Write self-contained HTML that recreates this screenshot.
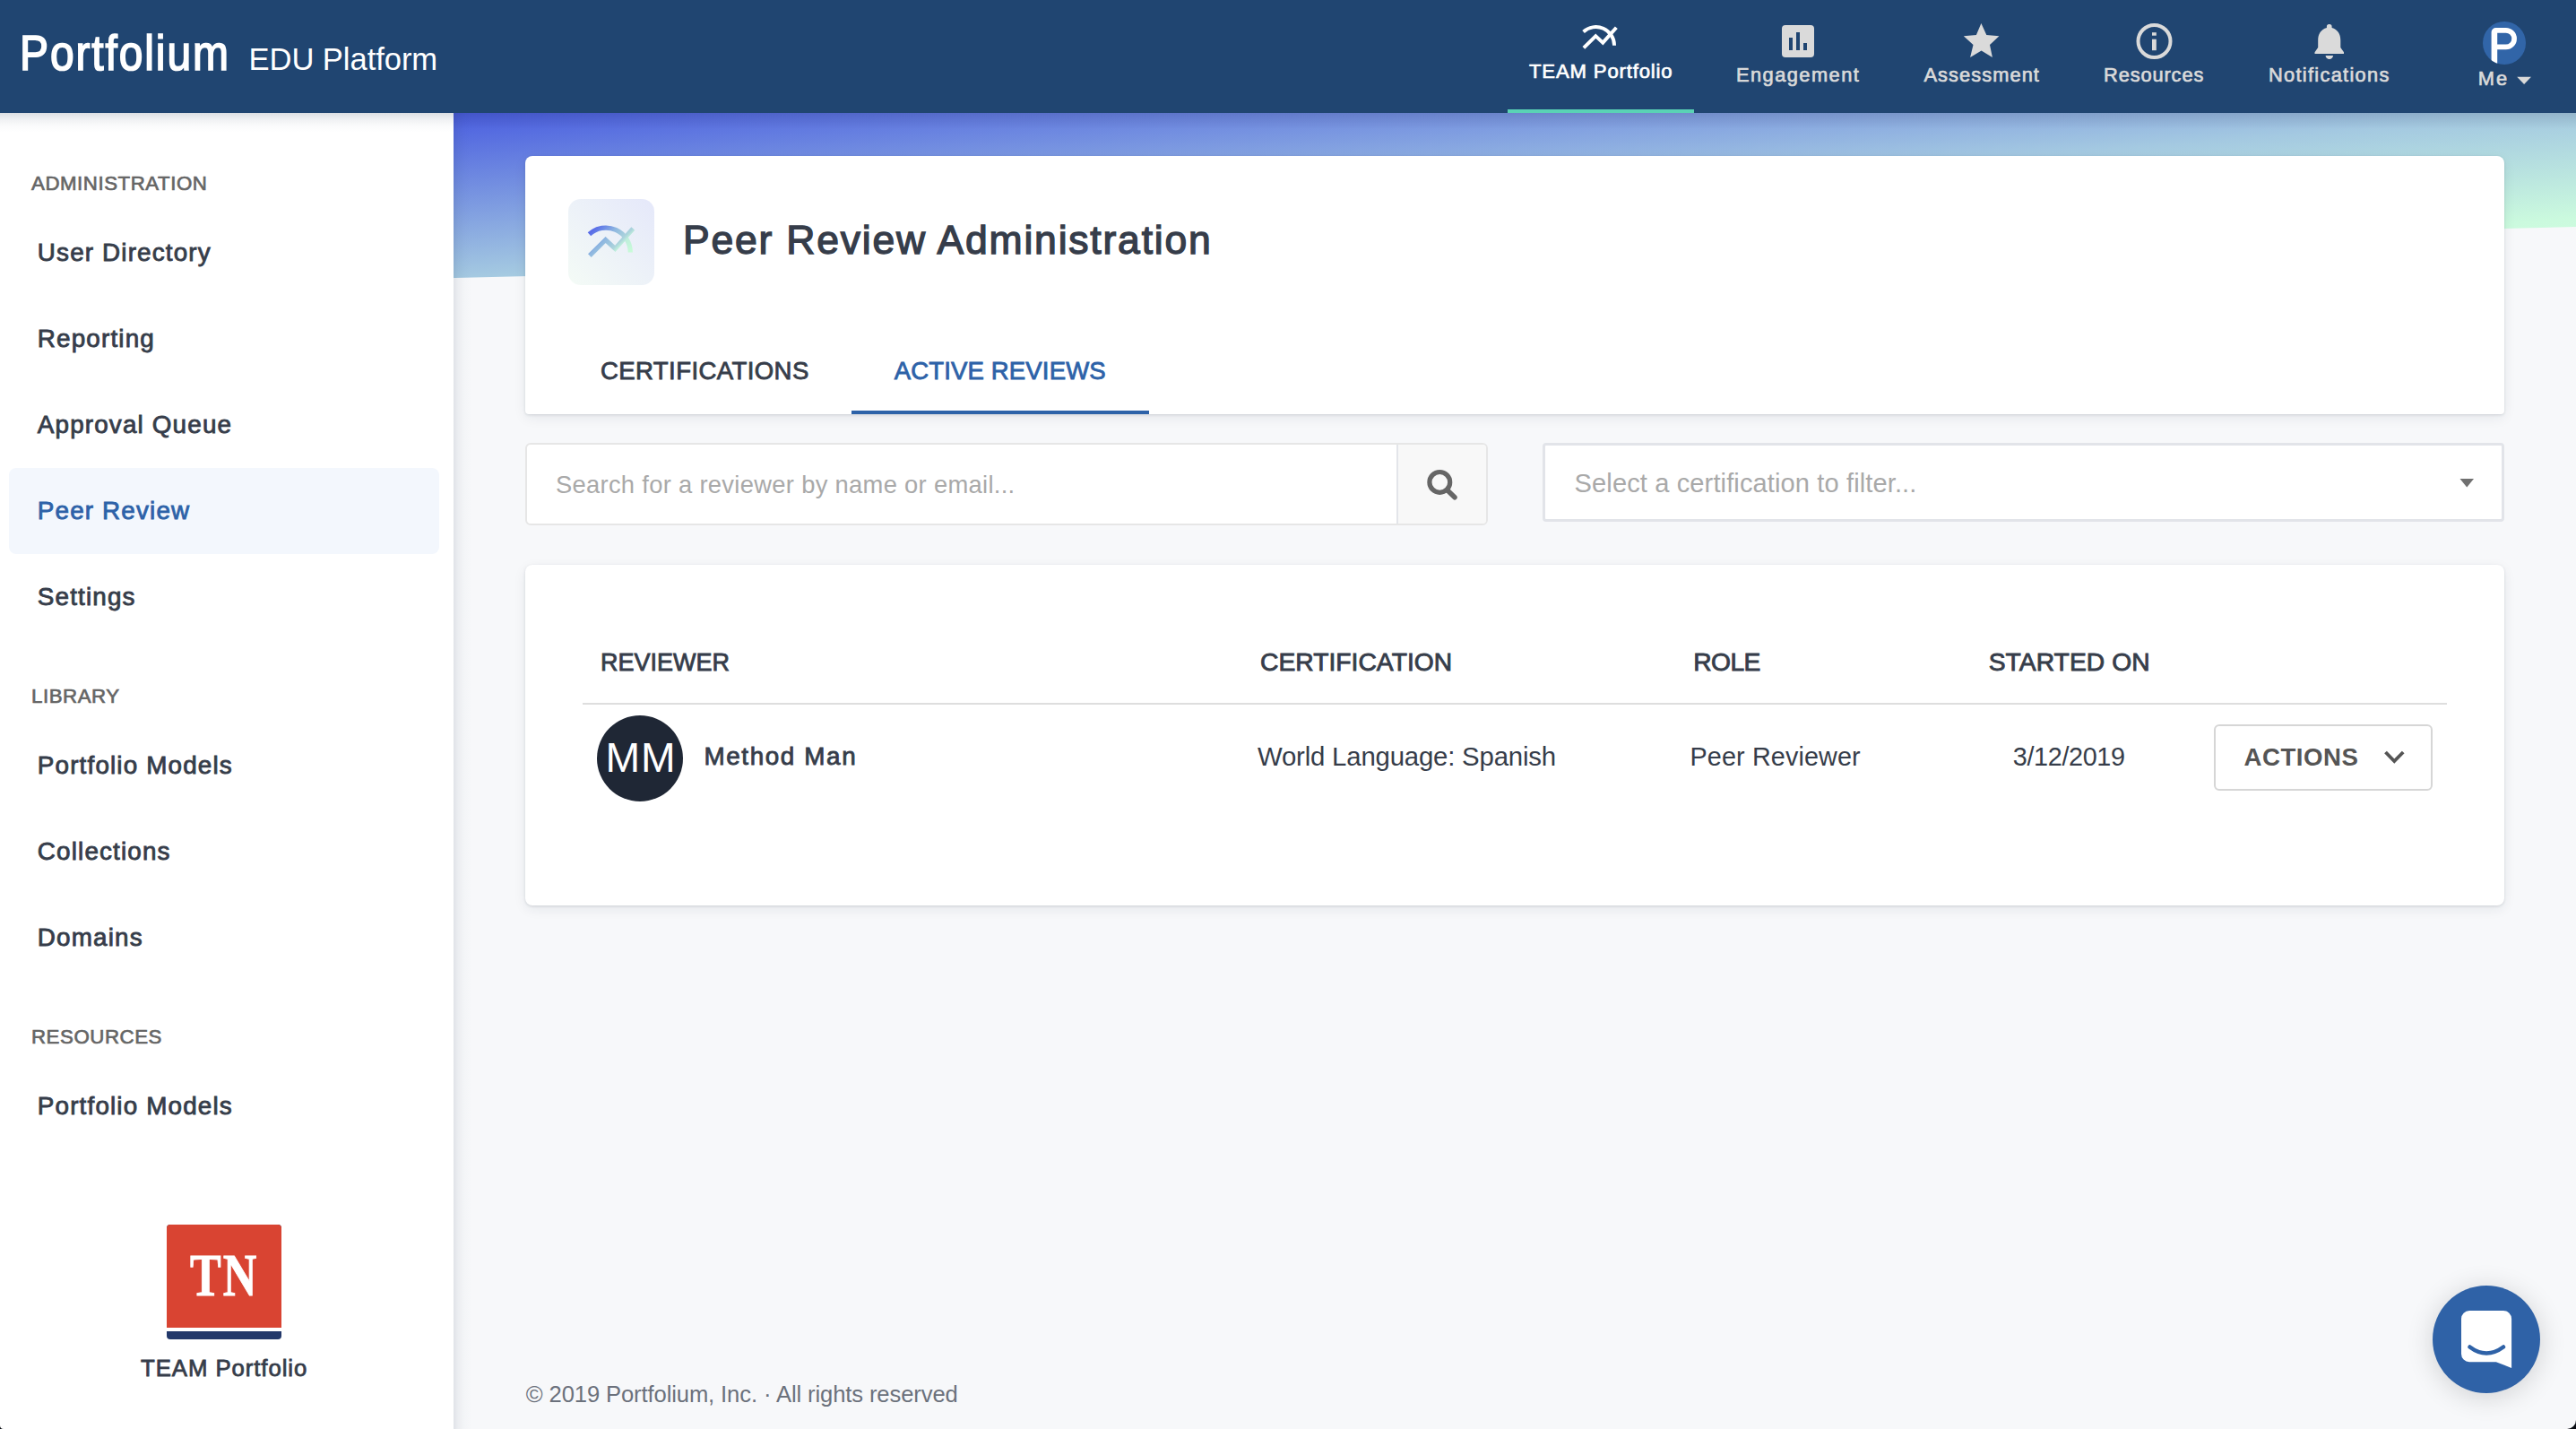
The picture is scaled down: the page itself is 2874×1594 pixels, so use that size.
<!DOCTYPE html>
<html><head><meta charset="utf-8"><title>Peer Review Administration</title>
<style>
html,body{margin:0;padding:0;}
body{width:2874px;height:1594px;position:relative;overflow:hidden;background:#f7f8fa;font-family:"Liberation Sans",sans-serif;}
.t{position:absolute;white-space:nowrap;}
.abs{position:absolute;}
</style></head><body>

<div class="abs" style="left:506px;top:126px;width:2368px;height:184px;background:linear-gradient(to bottom right,#4a5ee0 0%,#a4c9e1 50%,#cbfade 82%,#d2ffe1 100%);clip-path:polygon(0 0,100% 0,100% 127px,0 184px);"></div>
<div class="abs" style="left:506px;top:126px;width:2368px;height:18px;background:linear-gradient(to bottom,rgba(0,0,0,0.10),rgba(0,0,0,0));"></div>
<div class="abs" style="left:506px;top:126px;width:20px;height:1468px;background:linear-gradient(to right,rgba(20,40,70,0.10),rgba(20,40,70,0.05) 25%,rgba(20,40,70,0.015) 60%,rgba(20,40,70,0));"></div>
<div class="abs" style="left:0;top:126px;width:506px;height:1468px;background:#fff;"></div>
<div class="abs" style="left:0;top:126px;width:506px;height:22px;background:linear-gradient(to bottom,rgba(20,40,70,0.15),rgba(20,40,70,0.07) 30%,rgba(20,40,70,0.02) 65%,rgba(20,40,70,0));"></div>
<div class="abs" style="left:10px;top:522px;width:480px;height:96px;background:#f3f7fd;border-radius:8px;"></div>
<div class="t" style="left:34.0px;top:192.82px;font-size:22.25px;line-height:22.25px;font-weight:400;letter-spacing:0.554px;color:#666666;font-family:'Liberation Sans';-webkit-text-stroke:0.69px #666666;top:194.32px;left:35.0px;">ADMINISTRATION</div>
<div class="t" style="left:41.8px;top:268.02px;font-size:27.82px;line-height:27.82px;font-weight:400;letter-spacing:1.169px;color:#363d4a;-webkit-text-stroke:0.86px #363d4a">User Directory</div>
<div class="t" style="left:41.8px;top:364.02px;font-size:27.82px;line-height:27.82px;font-weight:400;letter-spacing:1.169px;color:#363d4a;-webkit-text-stroke:0.86px #363d4a">Reporting</div>
<div class="t" style="left:41.8px;top:460.02px;font-size:27.82px;line-height:27.82px;font-weight:400;letter-spacing:1.169px;color:#363d4a;-webkit-text-stroke:0.86px #363d4a">Approval Queue</div>
<div class="t" style="left:41.8px;top:556.02px;font-size:27.82px;line-height:27.82px;font-weight:400;letter-spacing:1.169px;color:#2d62a8;-webkit-text-stroke:0.86px #2d62a8">Peer Review</div>
<div class="t" style="left:41.8px;top:652.02px;font-size:27.82px;line-height:27.82px;font-weight:400;letter-spacing:1.169px;color:#363d4a;-webkit-text-stroke:0.86px #363d4a">Settings</div>
<div class="t" style="left:41.8px;top:840.02px;font-size:27.82px;line-height:27.82px;font-weight:400;letter-spacing:1.169px;color:#363d4a;-webkit-text-stroke:0.86px #363d4a">Portfolio Models</div>
<div class="t" style="left:41.8px;top:936.02px;font-size:27.82px;line-height:27.82px;font-weight:400;letter-spacing:1.169px;color:#363d4a;-webkit-text-stroke:0.86px #363d4a">Collections</div>
<div class="t" style="left:41.8px;top:1032.02px;font-size:27.82px;line-height:27.82px;font-weight:400;letter-spacing:1.169px;color:#363d4a;-webkit-text-stroke:0.86px #363d4a">Domains</div>
<div class="t" style="left:41.8px;top:1220.02px;font-size:27.82px;line-height:27.82px;font-weight:400;letter-spacing:1.169px;color:#363d4a;-webkit-text-stroke:0.86px #363d4a">Portfolio Models</div>
<div class="t" style="left:35.0px;top:766.3199999999999px;font-size:22.25px;line-height:22.25px;font-weight:400;letter-spacing:0.554px;color:#666;-webkit-text-stroke:0.69px #666">LIBRARY</div>
<div class="t" style="left:35.0px;top:1146.32px;font-size:22.25px;line-height:22.25px;font-weight:400;letter-spacing:0.554px;color:#666;-webkit-text-stroke:0.69px #666">RESOURCES</div>
<div class="abs" style="left:186px;top:1366px;width:128px;height:128px;border-radius:4px;overflow:hidden;background:#22386a;"><div class="abs" style="left:0;top:0;width:128px;height:114.5px;background:#d94432;"></div><div class="abs" style="left:0;top:114.5px;width:128px;height:4.5px;background:#fff;"></div></div>
<div class="t" style="left:211.3px;top:1388.84px;font-size:67.18px;line-height:67.18px;font-weight:700;color:#ffffff;font-family:'Liberation Serif';transform:scaleX(0.775);transform-origin:0 0;left:211.6px;letter-spacing:2.5px;top:1389.24px;-webkit-text-stroke:0.9px #fff;">TN</div>
<div class="t" style="left:157.1px;top:1513.52px;font-size:25.73px;line-height:25.73px;font-weight:400;letter-spacing:0.946px;color:#363d4a;font-family:'Liberation Sans';-webkit-text-stroke:0.8px #363d4a;">TEAM Portfolio</div>
<div class="abs" style="left:0;top:0;width:2874px;height:126px;background:#204571;"></div>
<div class="t" style="left:21.6px;top:31.74px;font-size:55.63px;line-height:55.63px;font-weight:400;color:#ffffff;font-family:'Liberation Sans';transform:scaleX(0.862);transform-origin:0 0;-webkit-text-stroke:1.72px #ffffff;left:22.15px;letter-spacing:2.2px;">Portfolium</div>
<div class="t" style="left:277.5px;top:48.72px;font-size:34.59px;line-height:34.59px;font-weight:400;letter-spacing:-0.064px;color:#ffffff;font-family:'Liberation Sans';">EDU Platform</div>
<div class="abs" style="left:1682px;top:122px;width:208px;height:4px;background:#5ad2b5;"></div>
<div class="t" style="left:1706.0px;top:68.94px;font-size:22.11px;line-height:22.11px;font-weight:400;letter-spacing:0.846px;color:#ffffff;font-family:'Liberation Sans';-webkit-text-stroke:0.69px #ffffff;">TEAM Portfolio</div>
<div class="t" style="left:1937.0px;top:72.88px;font-size:21.84px;line-height:21.84px;font-weight:400;letter-spacing:1.444px;color:#dadada;font-family:'Liberation Sans';-webkit-text-stroke:0.68px #dadada;">Engagement</div>
<div class="t" style="left:2146.5px;top:72.88px;font-size:21.84px;line-height:21.84px;font-weight:400;letter-spacing:1.056px;color:#dadada;font-family:'Liberation Sans';-webkit-text-stroke:0.68px #dadada;">Assessment</div>
<div class="t" style="left:2347.0px;top:72.88px;font-size:21.84px;line-height:21.84px;font-weight:400;letter-spacing:0.875px;color:#dadada;font-family:'Liberation Sans';-webkit-text-stroke:0.68px #dadada;">Resources</div>
<div class="t" style="left:2531.0px;top:72.88px;font-size:21.84px;line-height:21.84px;font-weight:400;letter-spacing:1.292px;color:#dadada;font-family:'Liberation Sans';-webkit-text-stroke:0.68px #dadada;">Notifications</div>
<div class="t" style="left:2764.7px;top:77.08px;font-size:21.84px;line-height:21.84px;font-weight:400;letter-spacing:2.2px;color:#dadada;font-family:'Liberation Sans';-webkit-text-stroke:0.68px #dadada;">Me</div>
<svg class="abs" style="left:1763.7px;top:26.7px" width="41.2" height="29.87" viewBox="-80 -115 200 145"><path d="M -67.5 -74 A 100 100 0 0 1 100 0" fill="none" stroke="#fff" stroke-width="19"/><path d="M -66 13 L -1 -51 L 38 -15 L 111 -97" fill="none" stroke="#fff" stroke-width="19" stroke-linejoin="miter"/></svg>
<div class="abs" style="left:1988px;top:28px;width:36px;height:36px;border-radius:4px;background:#dadada;"></div>
<div class="abs" style="left:1995.5px;top:42px;width:4.4px;height:13.799999999999997px;background:#204571;"></div>
<div class="abs" style="left:2003.8px;top:36px;width:4.4px;height:19.799999999999997px;background:#204571;"></div>
<div class="abs" style="left:2011.7px;top:48px;width:4.4px;height:7.799999999999997px;background:#204571;"></div>
<svg class="abs" style="left:0;top:0" width="2874" height="126" viewBox="0 0 2874 126"><polygon points="2210.4,25.9 2216.3,39 2230.4,40.3 2220,49.9 2222.9,64.1 2210.6,56.5 2198.1,64.1 2201.5,49.9 2190.8,40.3 2204.9,39" fill="#dadada"/><circle cx="2403.5" cy="46" r="18" fill="none" stroke="#dadada" stroke-width="4"/><rect x="2401" y="36.2" width="4.8" height="3.5" fill="#dadada"/><rect x="2401" y="43.7" width="4.8" height="12.5" fill="#dadada"/><path d="M2599 26.9 a2.6 2.6 0 0 1 2.6 2.6 v1.6 c6.5 1.8 9.7 7 9.7 14 v8 l3.7 5.2 v1.6 h-32.5 v-1.6 l3.7 -5.2 v-8 c0 -7 3.2 -12.2 9.7 -14 v-1.6 a2.6 2.6 0 0 1 2.6 -2.6z" fill="#dadada"/><path d="M2594.6 61.9 h8.4 a4.2 4.2 0 0 1 -8.4 0z" fill="#dadada"/><polygon points="2808.2,85.8 2824,85.8 2816.1,94" fill="#dadada"/></svg>
<div class="abs" style="left:2770px;top:24px;width:48px;height:48px;border-radius:50%;background:#3165a8;overflow:hidden;"><svg width="48" height="48" viewBox="2770 24 48 48" style="position:absolute;left:0;top:0"><path d="M2779.6 73 V36 a5 5 0 0 1 5 -5 h11.2 a12.15 12.15 0 0 1 0 24.3 h-9.6 V73z M2786.2 36.7 v12.9 h9.6 a6.45 6.45 0 0 0 0 -12.9z" fill="#fff" fill-rule="evenodd"/></svg></div>
<div class="abs" style="left:586px;top:174px;width:2208px;height:288px;background:#fff;border-radius:8px 8px 4px 4px;box-shadow:0 1px 3px rgba(30,40,60,0.14),0 4px 14px rgba(30,40,60,0.08);"></div>
<div class="abs" style="left:634px;top:222px;width:96px;height:96px;border-radius:14px;background:linear-gradient(to bottom left,#e5e8fa,#f4fbf6);"></div>
<svg class="abs" style="left:653.9px;top:249.9px" width="54.8" height="39.7" viewBox="-80 -115 200 145"><defs><linearGradient id="g1" gradientUnits="userSpaceOnUse" x1="-66" y1="-76" x2="55" y2="45"><stop offset="0" stop-color="#5a6ee8"/><stop offset="0.17" stop-color="#7090e5"/><stop offset="0.36" stop-color="#8fb8e0"/><stop offset="0.64" stop-color="#acd4dc"/><stop offset="0.72" stop-color="#bfeedc"/><stop offset="1" stop-color="#c8fbd8"/></linearGradient></defs><path d="M -67.5 -74 A 100 100 0 0 1 100 0" fill="none" stroke="url(#g1)" stroke-width="19"/><path d="M -66 13 L -1 -51 L 38 -15 L 111 -97" fill="none" stroke="url(#g1)" stroke-width="19"/></svg>
<div class="t" style="left:762.0px;top:245.64px;font-size:44.51px;line-height:44.51px;font-weight:400;letter-spacing:1.784px;color:#363d4a;font-family:'Liberation Sans';-webkit-text-stroke:1.38px #363d4a;">Peer Review Administration</div>
<div class="t" style="left:670.0px;top:400.26px;font-size:27.54px;line-height:27.54px;font-weight:400;letter-spacing:0.415px;color:#363d4a;font-family:'Liberation Sans';-webkit-text-stroke:0.85px #363d4a;">CERTIFICATIONS</div>
<div class="t" style="left:997.8px;top:400.26px;font-size:27.54px;line-height:27.54px;font-weight:400;letter-spacing:0.138px;color:#2d62a8;font-family:'Liberation Sans';-webkit-text-stroke:0.85px #2d62a8;">ACTIVE REVIEWS</div>
<div class="abs" style="left:950px;top:458px;width:332px;height:4px;background:#2d62a8;"></div>
<div class="abs" style="left:586px;top:494px;width:1069.5px;height:87.7px;border:2px solid #e6e6e6;border-radius:6px;background:#fff;overflow:hidden;"><div class="abs" style="left:970px;top:0;width:99.5px;height:87.7px;background:#f8f8f8;border-left:2px solid #e3e5ea;"></div></div>
<div class="t" style="left:619.9px;top:527.07px;font-size:27.33px;line-height:27.33px;font-weight:400;letter-spacing:0.315px;color:#a9a9a9;font-family:'Liberation Sans';">Search for a reviewer by name or email...</div>
<svg class="abs" style="left:1585px;top:515px" width="50" height="50" viewBox="1585 515 50 50"><circle cx="1606.3" cy="537.9" r="11.4" fill="none" stroke="#666" stroke-width="5.2"/><line x1="1615" y1="547" x2="1623" y2="554.8" stroke="#666" stroke-width="5.5" stroke-linecap="round"/></svg>
<div class="abs" style="left:1720.5px;top:494px;width:1067.5px;height:81.5px;border:3px solid #e2e4e9;border-radius:4px;background:#fff;"></div>
<div class="t" style="left:1756.6px;top:525.39px;font-size:29.07px;line-height:29.07px;font-weight:400;letter-spacing:0.112px;color:#a9a9a9;font-family:'Liberation Sans';">Select a certification to filter...</div>
<svg class="abs" style="left:2740px;top:530px" width="24" height="16" viewBox="2740 530 24 16"><polygon points="2744.5,534 2760,534 2752.25,543.5" fill="#707070"/></svg>
<div class="abs" style="left:586px;top:630px;width:2208px;height:380px;background:#fff;border-radius:8px;box-shadow:0 1px 3px rgba(30,40,60,0.14),0 4px 14px rgba(30,40,60,0.08);"></div>
<div class="t" style="left:669.5px;top:723.96px;font-size:28.23px;line-height:28.23px;font-weight:400;color:#363d4a;font-family:'Liberation Sans';transform:scaleX(0.9561);transform-origin:0 0;-webkit-text-stroke:0.88px #363d4a;left:669.5878378378378px;">REVIEWER</div>
<div class="t" style="left:1406.0px;top:723.96px;font-size:28.23px;line-height:28.23px;font-weight:400;letter-spacing:0.033px;color:#363d4a;font-family:'Liberation Sans';-webkit-text-stroke:0.88px #363d4a;">CERTIFICATION</div>
<div class="t" style="left:1889.3px;top:723.96px;font-size:28.23px;line-height:28.23px;font-weight:400;letter-spacing:-0.6px;color:#363d4a;font-family:'Liberation Sans';-webkit-text-stroke:0.88px #363d4a;">ROLE</div>
<div class="t" style="left:2218.7px;top:723.96px;font-size:28.23px;line-height:28.23px;font-weight:400;letter-spacing:0.067px;color:#363d4a;font-family:'Liberation Sans';-webkit-text-stroke:0.88px #363d4a;">STARTED ON</div>
<div class="abs" style="left:650px;top:784px;width:2080px;height:2px;background:#dedede;"></div>
<div class="abs" style="left:666px;top:798px;width:96px;height:96px;border-radius:50%;background:#1f2735;"></div>
<div class="t" style="left:675.2px;top:822.25px;font-size:46.37px;line-height:46.37px;font-weight:400;letter-spacing:1.6px;color:#ffffff;font-family:'Liberation Sans';letter-spacing:0.8px;left:675.6px;">MM</div>
<div class="t" style="left:785.5px;top:829.92px;font-size:27.82px;line-height:27.82px;font-weight:400;letter-spacing:1.611px;color:#363d4a;font-family:'Liberation Sans';-webkit-text-stroke:0.86px #363d4a;">Method Man</div>
<div class="t" style="left:1403.0px;top:829.15px;font-size:29.36px;line-height:29.36px;font-weight:400;letter-spacing:-0.195px;color:#363d4a;font-family:'Liberation Sans';">World Language: Spanish</div>
<div class="t" style="left:1885.5px;top:829.74px;font-size:28.78px;line-height:28.78px;font-weight:400;letter-spacing:0.125px;color:#363d4a;font-family:'Liberation Sans';">Peer Reviewer</div>
<div class="t" style="left:2245.8px;top:829.74px;font-size:28.78px;line-height:28.78px;font-weight:400;letter-spacing:-0.35px;color:#363d4a;font-family:'Liberation Sans';">3/12/2019</div>
<div class="abs" style="left:2470.3px;top:808px;width:239.6px;height:69.8px;border:2px solid #d6d6d6;border-radius:6px;background:#fff;"></div>
<div class="t" style="left:2503.5px;top:830.62px;font-size:27.62px;line-height:27.62px;font-weight:700;letter-spacing:0.517px;color:#555555;font-family:'Liberation Sans';">ACTIONS</div>
<svg class="abs" style="left:2655px;top:832px" width="34" height="26" viewBox="2655 832 34 26"><polyline points="2661.5,839 2671.3,849 2681.2,839" fill="none" stroke="#555" stroke-width="3.8"/></svg>
<div class="t" style="left:586.8px;top:1542.65px;font-size:25.58px;line-height:25.58px;font-weight:400;letter-spacing:-0.105px;color:#6b717c;font-family:'Liberation Sans';">© 2019 Portfolium, Inc. · All rights reserved</div>
<div class="abs" style="left:2714px;top:1434px;width:120px;height:120px;border-radius:50%;background:#2f62a7;box-shadow:0 4px 30px rgba(0,0,0,0.16);"></div>
<svg class="abs" style="left:2740px;top:1455px" width="70" height="80" viewBox="2740 1455 70 80"><path d="M2755 1462 h38.1 a9 9 0 0 1 9 9 v55 l-17.2 -6.8 h-29.9 a9 9 0 0 1 -9 -9 v-39.2 a9 9 0 0 1 9 -9z" fill="#fff"/><path d="M2755.5 1502.5 q18.5 14 37.5 0" fill="none" stroke="#2f62a7" stroke-width="4.5" stroke-linecap="round"/></svg>
<svg class="abs" style="left:2854px;top:1574px" width="20" height="20" viewBox="0 0 20 20"><path d="M20 10 A10 10 0 0 1 10 20 H20z" fill="#0a0d14"/></svg>
<svg class="abs" style="left:0;top:1590px" width="4" height="4" viewBox="0 0 4 4"><path d="M0 0 A4 4 0 0 0 4 4 H0z" fill="#0a0d14"/></svg>
</body></html>
